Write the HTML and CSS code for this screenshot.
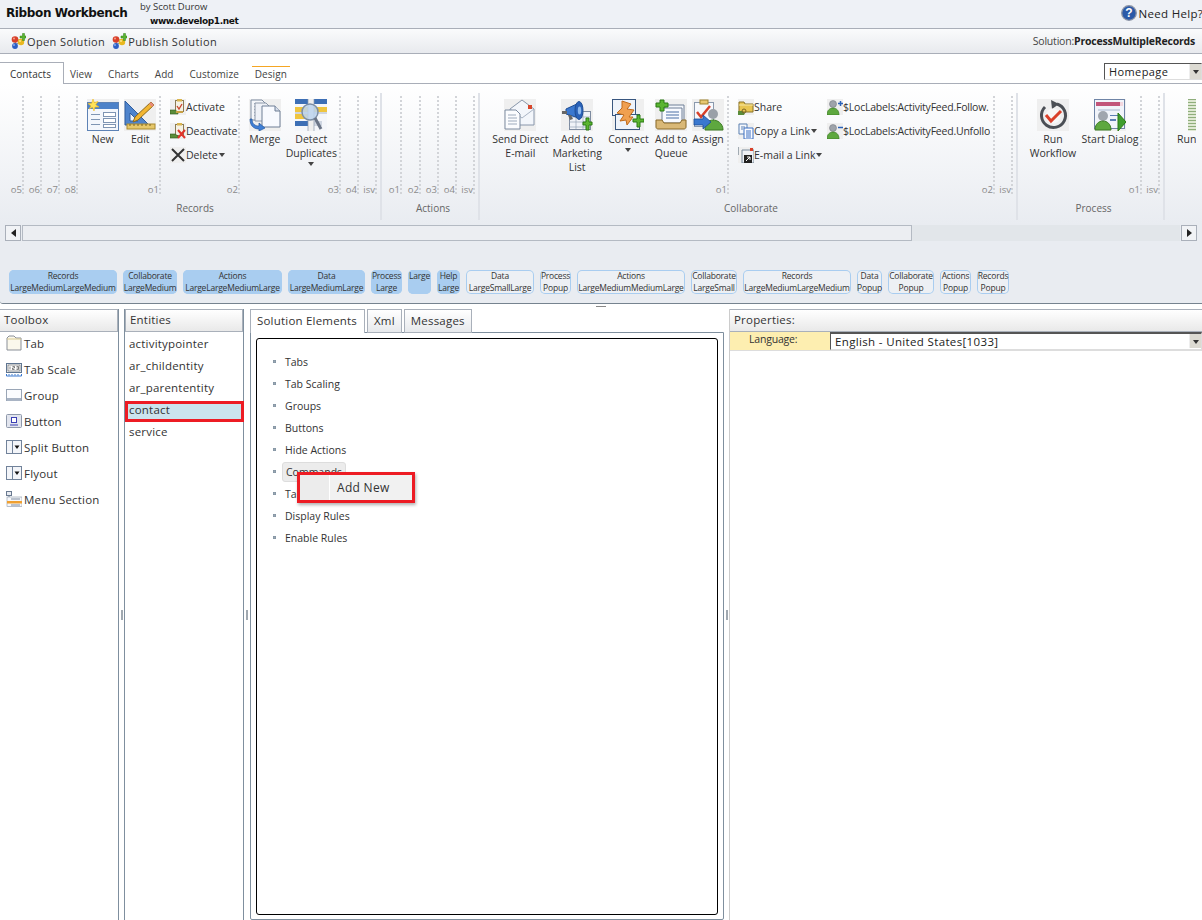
FILE: index.html
```html
<!DOCTYPE html>
<html>
<head>
<meta charset="utf-8">
<title>Ribbon Workbench</title>
<link rel="stylesheet" href="styles.css">
</head>
<body>

<svg class="defs" xmlns="http://www.w3.org/2000/svg">
  <symbol id="i-bubbles" viewBox="0 0 16 16">
    <path d="M6 6 L11 8 L5 12Z" fill="none" stroke="#888"/>
    <circle cx="5" cy="6.500" r="3.300" fill="#d8402a"/><circle cx="4" cy="5.500" r="1" fill="#f3a08e"/>
    <circle cx="11" cy="9" r="3.200" fill="#e9b81f"/><circle cx="10" cy="8" r="1" fill="#fbe58c"/>
    <circle cx="5" cy="13" r="2.900" fill="#2c5fc4"/><circle cx="4" cy="12" r=".9" fill="#93b4ee"/>
    <path d="M10 3h2.500V.5h2V3H16v2h-1.500v2.500h-2V5H10z" fill="#5bb531" stroke="#2e7d17" stroke-width=".5"/>
  </symbol>
  <symbol id="i-new" viewBox="0 0 32 32">
    <rect x=".5" y="3.500" width="31" height="28" fill="#f4f7fc" stroke="#5d82b5"/>
    <rect x="1" y="4" width="30" height="6" fill="#4d82c9"/>
    <path d="M4 15h9v1H4zM4 20h9v1H4zM4 25h9v1H4z" fill="#7f95b3"/>
    <rect x="16.500" y="13.500" width="12" height="4" fill="#fff" stroke="#7f95b3"/>
    <rect x="16.500" y="19.500" width="12" height="4" fill="#fff" stroke="#7f95b3"/>
    <rect x="16.500" y="25.500" width="12" height="3" fill="#fff" stroke="#7f95b3"/>
    <path d="M6 0l1.300 3.500L11 2.500 8.700 5.700 12 8 8 8l-1 4-1.500-3.700L2 10l2-3-3-2.500 3.700-.3z" fill="#ffe35a" stroke="#f2b91c" stroke-width=".6"/>
  </symbol>
  <symbol id="i-edit" viewBox="0 0 32 32">
    <path d="M1 2v24h24z" fill="#4f84cc" stroke="#2f5d9e"/>
    <path d="M6 14v8h8z" fill="#eef3fa" stroke="#2f5d9e"/>
    <rect x="3" y="25" width="28" height="5" fill="#e6c76a" stroke="#a98a30"/>
    <path d="M6 25v2M10 25v2M14 25v2M18 25v2M22 25v2M26 25v2" stroke="#7d6520"/>
    <path d="M27 3l3 3-16 15-5 2 2-5z" fill="#f2b632" stroke="#8c6a1c"/>
    <path d="M27 3l3 3-2 2-3-3z" fill="#e88a7a"/>
  </symbol>
  <symbol id="i-merge" viewBox="0 0 32 32">
    <path d="M2 1h11l3 3v17H2z" fill="#f4f6fa" stroke="#7d8ba0"/>
    <path d="M5 4.500h8M5 7.500h8M5 10.500h8M5 13.500h8M5 16.500h6" stroke="#a9b4c4"/>
    <path d="M6 4h11l3 3v15H6z" fill="#eef1f7" stroke="#8b97a8"/>
    <path d="M13 7h13l5 5v16H13z" fill="#f8faff" stroke="#6f7f96"/>
    <path d="M26 7v5h5" fill="#d7deea" stroke="#6f7f96"/>
    <path d="M3 20c0 5 3 7 7 7v-3l6 5-6 3v-2c-6 0-9-4-9-10z" fill="#3f7fd6" stroke="#24579f" stroke-width=".7"/>
  </symbol>
  <symbol id="i-detect" viewBox="0 0 32 32">
    <rect width="13" height="32" fill="#f4f6fa"/><rect x="19" width="13" height="32" fill="#f4f6fa"/>
    <path d="M0 0h13v5H0zM19 0h13v5H19zM0 22h13v5H0z" fill="#3d6fb5"/>
    <path d="M0 8h13v5H0zM19 8h13v5H19zM0 15h13v5H0z" fill="#efc53f"/>
    <path d="M19 22h8v5h-8z" fill="#cfd6e2"/>
    <path d="M13 0v32M19 0v32M0 14h13M19 14h13" stroke="#8b99ad" stroke-width=".7"/>
    <circle cx="15" cy="13" r="8" fill="#bcd3ef" fill-opacity=".85" stroke="#7c8ea5" stroke-width="1.500"/>
    <path d="M20 19l6 11" stroke="#6a7486" stroke-width="3"/>
  </symbol>
  <symbol id="i-email" viewBox="0 0 32 32">
    <path d="M6 10L18 1l12 9v16H6z" fill="#f3f6fb" stroke="#8896aa"/>
    <path d="M6 10l12 9 12-9" fill="none" stroke="#a9b4c4"/>
    <rect x="24" y="6" width="4" height="4" fill="#d9472b"/>
    <path d="M1 11h11l4 4v15H1z" fill="#fbfcfe" stroke="#7d8ba0"/>
    <path d="M4 16h8M4 19h9M4 22h9M4 25h9" stroke="#9daabc"/>
  </symbol>
  <symbol id="i-market" viewBox="0 0 32 32">
    <rect x="8.500" y="12.500" width="21" height="18" fill="#f0f3f8" stroke="#7d8ba0"/>
    <path d="M8 18h21M8 23h21M8 28h21M15 12v18M22 12v18" stroke="#97a5b8" stroke-width=".7"/>
    <path d="M5 10l13-6v15L5 15z" fill="#3a78cf" stroke="#1d4d94"/>
    <ellipse cx="18" cy="11.500" rx="4" ry="9" fill="#2a62b8" stroke="#1d4d94"/>
    <ellipse cx="18.500" cy="11.500" rx="1.700" ry="4" fill="#8db9ee"/>
    <path d="M1 12h5v3H1z" fill="#666"/><path d="M7 16l2 5 3-1-2-4z" fill="#666"/>
    <path d="M23 20h3v-4h3v4h3v3h-3v5h-3v-5h-3z" transform="translate(-1 3)" fill="#5bb531" stroke="#2a7a14"/>
  </symbol>
  <symbol id="i-connect" viewBox="0 0 32 32">
    <rect x=".5" y=".5" width="23" height="16" fill="#eef3fa" stroke="#38567f"/>
    <rect x="3.500" y="15.500" width="24" height="15" fill="#eef3fa" stroke="#38567f"/>
    <path d="M10 2l9 3-4 5 7 1-5 7 4 0-6 8-1-5-6 1 4-6-7-2 5-5z" fill="#f0a050" stroke="#c06a1a"/>
    <path d="M21 20h4v-4h3v4h4v3h-4v5h-3v-5h-4z" fill="#5bb531" stroke="#2a7a14"/>
  </symbol>
  <symbol id="i-queue" viewBox="0 0 32 32">
    <path d="M10 6h19v16H10z" fill="#f3f6fb" stroke="#6f7f96"/>
    <path d="M7 9h20v15H7z" fill="#f8faff" stroke="#6f7f96"/>
    <path d="M11 13h13M11 16h13M11 19h13" stroke="#4a6fa5"/>
    <path d="M1 21h6l2 3h16l2-3h4v7c0 1-1 2-2 2H3c-1 0-2-1-2-2z" fill="#d9b877" stroke="#8a6a2a"/>
    <path d="M1 4h4V1h4v3h4v4H9v4H5V8H1z" fill="#5bb531" stroke="#2a7a14"/>
  </symbol>
  <symbol id="i-assign" viewBox="0 0 32 32">
    <rect x="2.500" y="3.500" width="19" height="24" fill="#f6f8fc" stroke="#8a99ad"/>
    <rect x="8" y="1" width="8" height="4" fill="#e7c873" stroke="#a08430"/>
    <path d="M5 13l4 5 9-11" fill="none" stroke="#d8402a" stroke-width="2.500"/>
    <circle cx="21" cy="15" r="5" fill="#9aa0a8"/>
    <path d="M13 31c0-7 4-10 8-10s10 3 10 10z" fill="#5ea83f" stroke="#3a7a22"/>
    <path d="M2 20h9v-4l8 7-8 7v-4H2z" fill="#3a78cf" stroke="#1d4d94" stroke-width=".8"/>
  </symbol>
  <symbol id="i-workflow" viewBox="0 0 32 32">
    <path d="M20 5A12 12 0 1 1 8 8" fill="none" stroke="#4b4f55" stroke-width="3"/>
    <path d="M14 1l8 4-7 5z" fill="#4b4f55"/>
    <circle cx="16" cy="17" r="7.500" fill="#f7f7f7"/>
    <path d="M9 16l5 6 10-10" fill="none" stroke="#d9402a" stroke-width="3"/>
  </symbol>
  <symbol id="i-dialog" viewBox="0 0 32 32">
    <rect x=".5" y=".5" width="30" height="29" fill="#f1f4fa" stroke="#6f84a6"/>
    <rect x="2" y="3" width="24" height="4" fill="#c2557a"/>
    <rect x="26" y="3" width="3" height="4" fill="#f3d7de"/>
    <path d="M4 10h22v2H4z" fill="#ccd5e4"/>
    <path d="M16 16h8v1h-8zM16 20h6v2h-6z" fill="#5d7fb3"/>
    <circle cx="9" cy="17" r="5" fill="#a0a6ae"/>
    <path d="M1 31c0-6 4-9 8-9s8 3 8 9z" fill="#5ea83f" stroke="#3a7a22"/>
    <path d="M24 14l8 9-8 9z" fill="#3f9e2f" stroke="#2a7a14"/>
  </symbol>
  <symbol id="i-activate" viewBox="0 0 16 16">
    <rect x="5.500" y="1.500" width="8" height="11" fill="#f4f1e4" stroke="#8a7a55"/>
    <rect x="7" y="0" width="5" height="2.500" fill="#d9b550"/>
    <path d="M7 7l2 3 3-5" fill="none" stroke="#c8402a" stroke-width="1.300"/>
    <path d="M0 11h5l3 2v2H0z" fill="#5a8c3a" stroke="#2f5a1c" stroke-width=".6"/>
    <path d="M6 12h7v2H6z" fill="#c8a044"/>
  </symbol>
  <symbol id="i-deactivate" viewBox="0 0 16 16">
    <rect x="5.500" y="1.500" width="8" height="11" fill="#f4f1e4" stroke="#8a7a55"/>
    <rect x="7" y="0" width="5" height="2.500" fill="#d9b550"/>
    <path d="M0 11h5l3 2v2H0z" fill="#5a8c3a" stroke="#2f5a1c" stroke-width=".6"/>
    <path d="M8 7l7 8M15 7l-7 8" stroke="#e0332a" stroke-width="2"/>
  </symbol>
  <symbol id="i-delete" viewBox="0 0 16 16">
    <path d="M2 2l12 12M14 2L2 14" stroke="#333" stroke-width="2"/>
  </symbol>
  <symbol id="i-share" viewBox="0 0 16 16">
    <path d="M1 3h5l1 2h8v8H1z" fill="#e8c552" stroke="#8a7326"/>
    <path d="M1 6h14" stroke="#f7e8a5"/>
    <path d="M0 12h4l3 2-1 2H0z" fill="#5a8c3a"/><circle cx="6" cy="12" r="2" fill="none" stroke="#7b6320"/>
  </symbol>
  <symbol id="i-copy" viewBox="0 0 16 16">
    <path d="M1 1h8v10H1z" fill="#f6f8fc" stroke="#5d82b5"/>
    <path d="M6 5h9v11H6z" fill="#fbfcff" stroke="#3a6fc2"/>
    <path d="M8 8h5M8 10h5M8 12h5M8 14h5" stroke="#3a6fc2"/>
    <path d="M3 4h4M3 6h2" stroke="#5d82b5"/>
  </symbol>
  <symbol id="i-link" viewBox="0 0 16 16">
    <path d="M0 1h2M0 3h2M0 5h2M0 7h2" stroke="#567" stroke-dasharray="1 1"/>
    <path d="M4 3h12v13H4z" fill="#eef1f6" stroke="#789"/>
    <rect x="12" y="1" width="3" height="3" fill="#d9402a"/>
    <rect x="6" y="8" width="8" height="8" fill="#222"/>
    <path d="M8 14l4-4M9 10h3v3" stroke="#fff" fill="none"/>
  </symbol>
  <symbol id="i-user" viewBox="0 0 16 16">
    <circle cx="6" cy="5" r="3.500" fill="#9ea3aa" stroke="#6c7178" stroke-width=".5"/>
    <path d="M0 16c0-5 3-7 6-7s6 2 6 7z" fill="#5ea83f" stroke="#3a7a22" stroke-width=".7"/>
  </symbol>
  <symbol id="i-tab" viewBox="0 0 16 16">
    <path d="M1 15V3l2-2h5l2 2h5v12z" fill="#fbf8ec" stroke="#8a8f98"/>
    <path d="M1 4h14" stroke="#d8c98f"/>
  </symbol>
  <symbol id="i-scale" viewBox="0 0 16 16">
    <rect x=".5" y="2.500" width="15" height="9" fill="#f1f4f8" stroke="#5f7590"/>
    <rect x="2" y="4" width="12" height="6" fill="#fff" stroke="#333" stroke-width=".5"/>
    <path d="M4 5.500v3M6.500 5.500h2v1.500h-2v1.500h2M10.500 5.500h2v3h-2M10.500 7h2" fill="none" stroke="#333" stroke-width=".6"/>
    <path d="M.5 13v2h15v-2M3 13v1.500M6 13v1.500M9 13v1.500M12 13v1.500" fill="none" stroke="#3a78cf"/>
  </symbol>
  <symbol id="i-group" viewBox="0 0 16 16">
    <rect x=".5" y="2.500" width="15" height="11" fill="#fbfcfe" stroke="#9aa6b6"/>
    <rect x="1" y="11" width="14" height="3" fill="#a9b4c4"/>
  </symbol>
  <symbol id="i-button" viewBox="0 0 16 16">
    <rect x=".5" y="1.500" width="15" height="13" rx="1" fill="#e2e5ee" stroke="#8f99ab"/>
    <rect x="5.500" y="4.500" width="5" height="5" fill="#fff" stroke="#3b3fb5"/>
    <path d="M4 12h8" stroke="#3b3fb5"/>
  </symbol>
  <symbol id="i-split" viewBox="0 0 16 16">
    <rect x=".5" y="1.500" width="15" height="13" fill="#f3f5f9" stroke="#71829a"/>
    <path d="M6.500 1.500v13" stroke="#71829a"/>
    <path d="M8.500 6.500h5L11 10z" fill="#111"/>
  </symbol>
  <symbol id="i-menu" viewBox="0 0 16 16">
    <rect x=".5" y=".5" width="5" height="4" fill="#e8ebf1" stroke="#6a7a90"/>
    <path d="M3 4.500v9M3 7.500h3M3 10.500h3" stroke="#6a7a90" fill="none"/>
    <rect x="1" y="6" width="15" height="9.500" fill="#f6f7fa" stroke="#8b97a8" stroke-width=".6"/>
    <rect x="1" y="10" width="15" height="2.500" fill="#f0a030"/>
    <path d="M5 8h9M5 14h9" stroke="#7f8ca0"/>
  </symbol>
</svg>

<header class="topbar">
  <div class="brand">Ribbon Workbench</div>
  <div class="credit">
    <div class="author">by Scott Durow</div>
    <div class="site">www.develop1.net</div>
  </div>
  <div class="help">
    <svg class="ico16" viewBox="0 0 16 16"><circle cx="8" cy="8" r="7.300" fill="#2b5aa8" stroke="#8d95a6" stroke-width="1.300"/><text x="8" y="12" class="help-mark">?</text></svg>
    <span>Need Help?</span>
  </div>
</header>

<div class="cmdbar">
  <div class="cmd"><svg class="ico16"><use href="#i-bubbles"/></svg>Open Solution</div>
  <div class="cmd"><svg class="ico16"><use href="#i-bubbles"/></svg>Publish Solution</div>
  <div class="solution">Solution:<b>ProcessMultipleRecords</b></div>
</div>

<div class="tabbar">
  <div class="tab active">Contacts</div>
  <div class="tab">View</div>
  <div class="tab">Charts</div>
  <div class="tab">Add</div>
  <div class="tab">Customize</div>
  <div class="tab design">Design</div>
  <div class="combo home-combo"><span>Homepage</span><i class="combo-btn"></i></div>
</div>

<div class="ribbon">
  <div class="groups">

    <section class="group g-records">
      <div class="slots">
        <div class="slot s24"><label>o5</label></div>
        <div class="slot s18"><label>o6</label></div>
        <div class="slot s18"><label>o7</label></div>
        <div class="slot s18"><label>o8</label></div>
        <div class="slot s83">
          <div class="big-row pl6">
            <div class="big w38"><svg class="ico32"><use href="#i-new"/></svg><span>New</span></div>
            <div class="big w38"><svg class="ico32"><use href="#i-edit"/></svg><span>Edit</span></div>
          </div>
          <label>o1</label>
        </div>
        <div class="slot s79">
          <div class="mid-col">
            <div class="mid"><svg class="ico16"><use href="#i-activate"/></svg>Activate</div>
            <div class="mid"><svg class="ico16"><use href="#i-deactivate"/></svg>Deactivate</div>
            <div class="mid"><svg class="ico16"><use href="#i-delete"/></svg>Delete<i class="arrow"></i></div>
          </div>
          <label>o2</label>
        </div>
        <div class="slot s101">
          <div class="big-row pl6">
            <div class="big w38"><svg class="ico32"><use href="#i-merge"/></svg><span>Merge</span></div>
            <div class="big w56"><svg class="ico32"><use href="#i-detect"/></svg><span>Detect Duplicates</span><i class="arrow"></i></div>
          </div>
          <label>o3</label>
        </div>
        <div class="slot s18"><label>o4</label></div>
        <div class="slot s18"><label>isv</label></div>
      </div>
      <div class="group-name shift-more">Records</div>
    </section>

    <section class="group g-actions">
      <div class="slots">
        <div class="slot s20"><label>o1</label></div>
        <div class="slot s19"><label>o2</label></div>
        <div class="slot s18"><label>o3</label></div>
        <div class="slot s18"><label>o4</label></div>
        <div class="slot s18"><label>isv</label></div>
      </div>
      <div class="group-name">Actions</div>
    </section>

    <section class="group g-collab">
      <div class="slots">
        <div class="slot s249">
          <div class="big-row pl10">
            <div class="big w61"><svg class="ico32"><use href="#i-email"/></svg><span>Send Direct E-mail</span></div>
            <div class="big w53"><svg class="ico32"><use href="#i-market"/></svg><span>Add to Marketing List</span></div>
            <div class="big w50"><svg class="ico32"><use href="#i-connect"/></svg><span>Connect</span><i class="arrow"></i></div>
            <div class="big w36"><svg class="ico32"><use href="#i-queue"/></svg><span>Add to Queue</span></div>
            <div class="big w38"><svg class="ico32"><use href="#i-assign"/></svg><span>Assign</span></div>
          </div>
          <label>o1</label>
        </div>
        <div class="slot s266">
          <div class="mid-cols">
            <div class="mid-col first">
              <div class="mid"><svg class="ico16"><use href="#i-share"/></svg>Share</div>
              <div class="mid"><svg class="ico16"><use href="#i-copy"/></svg>Copy a Link<i class="arrow"></i></div>
              <div class="mid"><svg class="ico16"><use href="#i-link"/></svg>E-mail a Link<i class="arrow"></i></div>
            </div>
            <div class="mid-col feed">
              <div class="mid"><svg class="ico16" viewBox="0 0 16 16"><use href="#i-user"/><path d="M11 4.500h5M13.500 2v5" stroke="#2a62b8" stroke-width="1.500"/></svg>$LocLabels:ActivityFeed.Follow.</div>
              <div class="mid"><svg class="ico16" viewBox="0 0 16 16"><use href="#i-user"/><path d="M11 4.500h5" stroke="#2a62b8" stroke-width="1.500"/></svg>$LocLabels:ActivityFeed.Unfollo</div>
            </div>
          </div>
          <label>o2</label>
        </div>
        <div class="slot s18"><label>isv</label></div>
      </div>
      <div class="group-name">Collaborate</div>
    </section>

    <section class="group g-process">
      <div class="slots">
        <div class="slot s124">
          <div class="big-row pl8">
            <div class="big w54"><svg class="ico32"><use href="#i-workflow"/></svg><span>Run Workflow</span></div>
            <div class="big w60"><svg class="ico32"><use href="#i-dialog"/></svg><span>Start Dialog</span></div>
          </div>
          <label>o1</label>
        </div>
        <div class="slot s18"><label>isv</label></div>
      </div>
      <div class="group-name">Process</div>
    </section>

    <section class="group g-cut">
      <div class="cut-btn">
        <div class="cut-icon"></div>
        <span>Run</span>
      </div>
    </section>
  </div>

  <div class="scrollbar">
    <div class="sb-btn"><i class="tri-left"></i></div>
    <div class="sb-thumb"></div>
    <div class="sb-rest"></div>
    <div class="sb-btn"><i class="tri-right"></i></div>
  </div>

  <div class="pills">
    <div class="pill on">Records<br>LargeMediumLargeMedium</div>
    <div class="pill on">Collaborate<br>LargeMedium</div>
    <div class="pill on">Actions<br>LargeLargeMediumLarge</div>
    <div class="pill on">Data<br>LargeMediumLarge</div>
    <div class="pill on">Process<br>Large</div>
    <div class="pill on">Large<br>&nbsp;</div>
    <div class="pill on">Help<br>Large</div>
    <div class="pill">Data<br>LargeSmallLarge</div>
    <div class="pill">Process<br>Popup</div>
    <div class="pill">Actions<br>LargeMediumMediumLarge</div>
    <div class="pill">Collaborate<br>LargeSmall</div>
    <div class="pill">Records<br>LargeMediumLargeMedium</div>
    <div class="pill">Data<br>Popup</div>
    <div class="pill">Collaborate<br>Popup</div>
    <div class="pill">Actions<br>Popup</div>
    <div class="pill">Records<br>Popup</div>
  </div>
</div>

<div class="hsplit"><i></i></div>

<div class="main">
  <aside class="panel toolbox">
    <div class="panel-head">Toolbox</div>
    <ul class="tools">
      <li><svg class="ico16"><use href="#i-tab"/></svg>Tab</li>
      <li><svg class="ico16"><use href="#i-scale"/></svg>Tab Scale</li>
      <li><svg class="ico16"><use href="#i-group"/></svg>Group</li>
      <li><svg class="ico16"><use href="#i-button"/></svg>Button</li>
      <li><svg class="ico16"><use href="#i-split"/></svg>Split Button</li>
      <li><svg class="ico16"><use href="#i-split"/></svg>Flyout</li>
      <li><svg class="ico16"><use href="#i-menu"/></svg>Menu Section</li>
    </ul>
  </aside>
  <div class="vsplit"><i></i></div>
  <aside class="panel entities">
    <div class="panel-head">Entities</div>
    <ul class="entity-list">
      <li>activitypointer</li>
      <li>ar_childentity</li>
      <li>ar_parententity</li>
      <li class="picked">contact</li>
      <li>service</li>
    </ul>
  </aside>
  <div class="vsplit wide"><i></i></div>
  <section class="center">
    <div class="center-tabs">
      <div class="ctab active">Solution Elements</div>
      <div class="ctab">Xml</div>
      <div class="ctab">Messages</div>
    </div>
    <div class="center-body">
      <div class="tree-box">
        <ul class="tree">
          <li><span>Tabs</span></li>
          <li><span>Tab Scaling</span></li>
          <li><span>Groups</span></li>
          <li><span>Buttons</span></li>
          <li><span>Hide Actions</span></li>
          <li class="hover"><span>Commands</span>
            <div class="ctx-menu"><span class="ctx-gutter"></span><span class="ctx-item">Add New</span></div>
          </li>
          <li><span>Tab Commands</span></li>
          <li><span>Display Rules</span></li>
          <li><span>Enable Rules</span></li>
        </ul>
      </div>
    </div>
  </section>
  <div class="vsplit"><i></i></div>
  <section class="props">
    <div class="panel-head">Properties:</div>
    <div class="prop-row">
      <div class="prop-name">Language:</div>
      <div class="combo prop-combo"><span>English - United States[1033]</span><i class="combo-btn"></i></div>
    </div>
  </section>
</div>

</body>
</html>
```
FILE: styles.css
```css
* { box-sizing: border-box; }

html, body { margin: 0; padding: 0; }

body {
  width: 1202px;
  height: 920px;
  overflow: hidden;
  background: #fff;
  font-family: "Open Sans", "Noto Sans", sans-serif;
  font-size: 11px;
  color: #222;
}

.defs { display: none; }

ul { list-style: none; margin: 0; padding: 0; }

.ico16 { width: 16px; height: 16px; flex: none; }
.ico32 { width: 32px; height: 32px; flex: none; background: #efefef; }

/* top bars */
.topbar {
  display: flex;
  height: 29px;
  background: #eef1f6;
  border-bottom: 1px solid #a9aeb8;
}
.brand { margin: 5px 0 0 6px; width: 134px; font: bold 12px/16px "DejaVu Sans", sans-serif; letter-spacing: -.38px; color: #111; }
.author { margin-top: 1px; font-size: 9.5px; line-height: 11px; color: #333; }
.site { margin: 3px 0 0 10px; font: bold 9px/12px "DejaVu Sans", sans-serif; letter-spacing: -.38px; color: #111; }
.help { display: flex; align-items: center; gap: 2px; margin: 0 -1px 2px auto; font-size: 11.5px; letter-spacing: .3px; }
.help-mark { font: bold 12px "Liberation Sans", sans-serif; fill: #fff; text-anchor: middle; }

.cmdbar {
  display: flex;
  align-items: center;
  height: 25px;
  padding-left: 10px;
  background: linear-gradient(#fafbfc, #e8eaee);
  border-bottom: 1px solid #a9aeb8;
}
.cmd { display: flex; align-items: center; gap: 1px; margin-right: 6px; font-size: 11px; letter-spacing: .38px; color: #333; }
.solution { margin: 0 7px 0 auto; font-size: 10.5px; color: #444; letter-spacing: -.2px; }
.solution b { color: #222; }

.tabbar {
  display: flex;
  height: 30px;
  background: #fff;
  border-bottom: 1px solid #a9aeb8;
}
.tab { margin: 8px 10px 0 0; padding: 0 3px; height: 21px; line-height: 25px; font-size: 10px; letter-spacing: .05px; color: #444; }
.tab.active {
  width: 64px;
  height: 22px;
  margin-right: 3px;
  padding: 0 2px 0 0;
  line-height: 23px;
  text-align: center;
  color: #333;
  background: #fff;
  border-top: 1px solid #a9aeb8;
  border-right: 1px solid #a9aeb8;
}
.tab.design { position: relative; }
.tab.design::before {
  content: "";
  position: absolute;
  top: 4px;
  left: 0;
  right: 0;
  height: 1px;
  background: #f5a623;
}

.combo {
  display: flex;
  align-items: center;
  background: #fff;
  border-style: solid;
  border-color: #555 #ddd #ddd #555;
  border-width: 1px;
}
.combo span { flex: 1; padding-left: 4px; white-space: nowrap; }
.combo-btn {
  position: relative;
  width: 12px;
  height: 100%;
  background: #dcdad2;
  border-left: 1px solid #eee;
}
.combo-btn::after {
  content: "";
  position: absolute;
  left: 3px;
  top: 6px;
  border: 3px solid transparent;
  border-top: 4px solid #333;
  border-bottom: 0;
}
.home-combo { width: 98px; height: 17px; margin: 9px 0 0 auto; font-size: 11px; letter-spacing: .4px; }

/* ribbon */
.ribbon {
  height: 220px;
  background: linear-gradient(#fff 0, #e9ecf1 140px);
  border-bottom: 1px solid #76838f;
  border-bottom-left-radius: 3px;
}
.groups { display: flex; height: 141px; padding-top: 9px; }
.group { height: 127px; padding-top: 3px; border-right: 2px solid #dfe2e8; }
.g-records { width: 382px; }
.g-actions { width: 98px; }
.g-collab { width: 538px; }
.g-process { width: 147px; }
.g-cut { width: 31px; border: 0; overflow: hidden; }

.slots { display: flex; height: 98px; }
.slot {
  display: flex;
  flex-direction: column;
  padding-top: 3px;
  border-right: 2px dotted #d2d4d8;
}
.slot label {
  margin: auto 0 -1px;
  text-align: right;
  font-size: 9.5px;
  line-height: 11px;
  color: #8b8b8b;
  white-space: nowrap;
}
.s18 { width: 18px; }
.s19 { width: 19px; }
.s20 { width: 20px; }
.s24 { width: 24px; }
.s79 { width: 79px; }
.s83 { width: 83px; }
.s101 { width: 101px; }
.s124 { width: 124px; }
.s249 { width: 249px; }
.s266 { width: 266px; }

.group-name { margin-top: 7px; padding-left: 6px; text-align: center; line-height: 14px; font-size: 10px; color: #666; }
.group-name.shift-more { padding-left: 10px; }

.big-row { display: flex; }
.pl6 { padding-left: 6px; }
.pl8 { padding-left: 8px; }
.pl10 { padding-left: 10px; }
.big { display: flex; flex-direction: column; align-items: center; text-align: center; line-height: 14px; font-size: 10.5px; color: #333; }
.big span { margin-top: 1px; }
.big .arrow { margin: 2px 0 0; }
.w36 { width: 36px; }
.w38 { width: 38px; }
.w50 { width: 50px; }
.w53 { width: 53px; }
.w54 { width: 54px; }
.w56 { width: 56px; }
.w60 { width: 60px; }
.w61 { width: 61px; }

.arrow {
  display: inline-block;
  margin-left: 1px;
  border: 3px solid transparent;
  border-top: 4px solid #444;
  border-bottom: 0;
}

.mid-cols { display: flex; }
.mid-col { display: flex; flex-direction: column; gap: 8px; padding: 0 0 0 9px; }
.mid-col.first { width: 98px; }
.mid-col.feed { width: 163px; padding-left: 0; overflow: hidden; letter-spacing: -.22px; }
.mid { display: flex; align-items: center; height: 16px; font-size: 10.5px; color: #333; white-space: nowrap; }
.mid .ico16 { background: #efefef; }

.cut-btn { padding: 3px 0 0 12px; height: 100%; line-height: 14px; font-size: 10.5px; color: #333; }
.cut-icon {
  width: 8px;
  height: 32px;
  margin: 0 0 1px 11px;
  background: repeating-linear-gradient(#8fae7c 0 1px, #dfe8d3 1px 3px);
}

.scrollbar { display: flex; height: 16px; margin: 0 5px; }
.sb-btn { display: flex; align-items: center; justify-content: center; width: 16px; border: 1px solid #aab0ba; background: #f1f3f6; }
.sb-thumb { width: 890px; margin-left: 1px; border: 1px solid #b4bac3; background: #ecEEf2; }
.sb-rest { flex: 1; background: #e2e6ea; margin-right: 1px; }
.tri-left { border: 4px solid transparent; border-right: 5px solid #222; border-left: 0; }
.tri-right { border: 4px solid transparent; border-left: 5px solid #222; border-right: 0; }

.pills {
  display: grid;
  grid-template-columns: 108px 54px 99px 77px 31px 23px 23px 68px 31px 108px 46px 108px 25px 46px 31px 32px;
  column-gap: 6px;
  margin: 29px 0 0 9px;
}
.pill {
  height: 24px;
  text-align: center;
  white-space: nowrap;
  font: 8.5px/12px "Open Sans", sans-serif;
  letter-spacing: -.2px;
  color: #333;
  box-shadow: inset 0 0 0 1px #a9cdf0;
  border-radius: 5px;
  background: #edf0f4;
}
.pill.on { background: #a9cdf0; }

/* panels */
.hsplit { display: flex; justify-content: center; height: 5px; }
.hsplit i { width: 10px; height: 1px; margin-top: 2px; background: #888; }

.main { display: flex; height: 611px; }

.panel-head {
  height: 23px;
  padding-left: 4px;
  line-height: 20px;
  font-size: 11.5px;
  letter-spacing: .2px;
  color: #333;
  background: linear-gradient(#fff, #e9e9e9);
  border: 1px solid #a9b0ba;
}
.panel { border-right: 1px solid #7f8f9e; }
.toolbox { width: 119px; }
.toolbox .panel-head { border-left: 0; }
.entities { width: 120px; border-left: 1px solid #7f8f9e; }

.vsplit { display: flex; align-items: center; width: 5px; padding-left: 2px; }
.vsplit.wide { width: 6px; }
.vsplit i { width: 2px; height: 10px; background: #a0a8b0; }

.tools { margin-top: -2px; }
.tools li { display: flex; align-items: center; gap: 2px; height: 26px; padding-left: 6px; font-size: 11.5px; letter-spacing: .2px; color: #333; }

.entity-list { padding-top: 1px; }
.entity-list li { height: 22px; line-height: 22px; padding-left: 4px; font-size: 11.5px; letter-spacing: .2px; color: #333; }
.entity-list li.picked {
  position: relative;
  margin-right: -1px;
  background: linear-gradient(#cbe4ee, #cbe4ee) 0 2px / 100% 21px no-repeat;
}
.entity-list li.picked::after {
  content: "";
  position: absolute;
  left: 0;
  right: 0;
  top: 2px;
  height: 15px;
  border: 3px solid #ed1c24;
}

.center { width: 474px; }
.center-tabs { display: flex; gap: 2px; height: 24px; }
.ctab {
  height: 24px;
  padding: 0 6px;
  line-height: 22px;
  font-size: 11.5px;
  letter-spacing: .2px;
  color: #333;
  background: linear-gradient(#fff, #e7e9ec);
  border: 1px solid #a9b0ba;
}
.ctab.active { width: 115px; background: #fff; border-bottom: 0; position: relative; z-index: 1; }
.center-body {
  height: 588px;
  margin-top: -1px;
  padding: 5px 5px 0;
  border: 1px solid #7f8f9e;
  border-radius: 0 0 2px 2px;
}
.tree-box { height: 577px; border: 1px solid #000; border-radius: 3px; }
.tree { padding: 12px 0 0 14px; }
.tree li {
  position: relative;
  height: 22px;
  padding-left: 14px;
  line-height: 22px;
  font-size: 10.5px;
  color: #333;
}
.tree li::before {
  content: "";
  position: absolute;
  left: 2px;
  top: 9px;
  width: 3px;
  height: 3px;
  background: #9aa8b4;
  box-shadow: inset 0 0 0 .5px #7f8f9e;
}
.tree li.hover > span {
  display: inline-block;
  margin: 1px 0 0 -3px;
  padding: 0 3px;
  height: 20px;
  line-height: 19px;
  background: #ececec;
  border: 1px solid #ddd;
  border-radius: 3px;
}
.ctx-menu {
  position: absolute;
  left: 26px;
  top: 11px;
  z-index: 3;
  display: flex;
  width: 118px;
  height: 31px;
  background: #f1f1f1;
  border: 3px solid #ed1c24;
  box-shadow: 1px 2px 3px rgba(0,0,0,.3);
}
.ctx-gutter { width: 30px; border-right: 1px solid #fff; background: #ececec; }
.ctx-item { padding-left: 7px; line-height: 26px; font-size: 12px; letter-spacing: .3px; color: #333; }

.props { flex: 1; border-left: 1px solid #ccc; }
.props .panel-head { border-right: 0; border-left: 0; height: 23px; }
.prop-row { display: flex; height: 19px; border-bottom: 1px solid #ddd; }
.prop-name { width: 100px; padding-left: 19px; line-height: 15px; font-size: 10.5px; letter-spacing: -.2px; color: #333; background: #fdeeb0; }
.prop-combo { flex: 1; border-top: 2px solid #555; padding-bottom: 1px; font-size: 11.5px; letter-spacing: .35px; }
```
